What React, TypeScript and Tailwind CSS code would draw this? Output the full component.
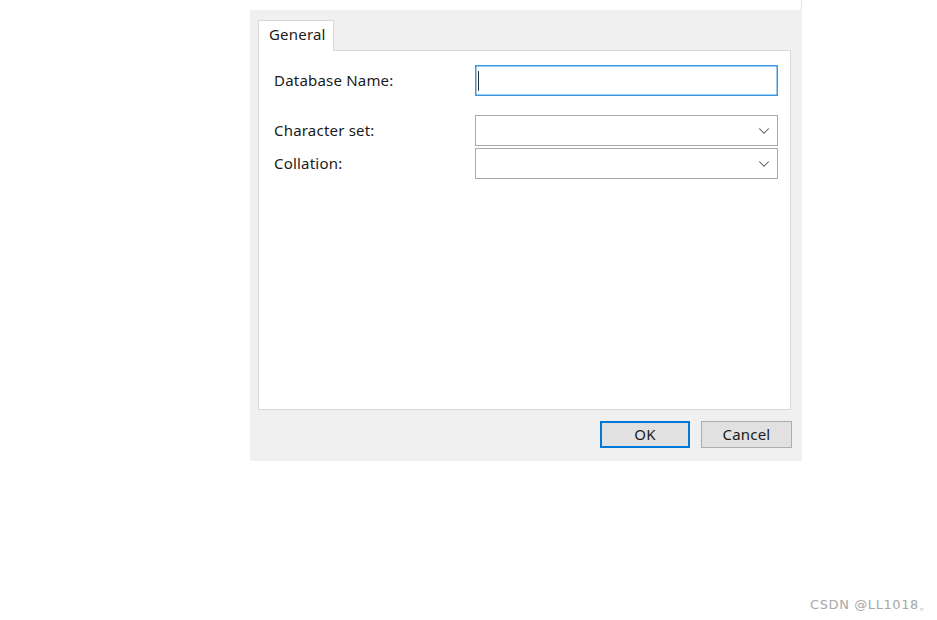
import { ChevronDown } from 'lucide-react';

function Select() {
  return (
    <div className="h-[31px] w-[303px] border border-solid border-[#a9a9a9] bg-white flex items-center justify-end pr-[4px]">
      <ChevronDown size={18} strokeWidth={1.4} className="text-[#555555]" />
    </div>
  );
}

export default function App() {
  return (
    <div className="relative w-[937px] h-[620px] bg-white text-[15px] tracking-[0.2px] text-[#1a1a1a] font-['Noto_Sans','Open_Sans',sans-serif]">
      <div className="ml-[250px] w-[552px]">
        {/* top strip */}
        <div className="h-[10px] bg-white border-r border-[#e4e4e4]" />

        {/* dialog body */}
        <div className="h-[451px] bg-[#f0f0f0] pt-[10px] pl-[8px] pr-[11px] flex flex-col">
          <div className="flex">
            <div className="relative z-10 -mb-px h-[31px] w-[76px] bg-white border border-b-0 border-[#d9d9d9] flex items-center pl-[10px] pb-[3px] leading-none">
              General
            </div>
          </div>
          <div className="h-[360px] w-[533px] bg-white border border-[#d9d9d9] pt-[14px] pl-[15px] pr-[12px]">
            <div className="flex items-center">
              <div className="w-[201px]">Database Name:</div>
              <div className="h-[31px] w-[303px] bg-white ring-[1.5px] ring-inset ring-[#3a97e4] flex items-center pl-[3px]">
                <div className="w-px h-[20px] bg-[#333333]" />
              </div>
            </div>
            <div className="mt-[19px] flex items-center">
              <div className="w-[201px]">Character set:</div>
              <Select />
            </div>
            <div className="mt-[2px] flex items-center">
              <div className="w-[201px]">Collation:</div>
              <Select />
            </div>
          </div>

          <div className="mt-[11px] flex justify-end gap-[11px]">
            <button className="h-[27px] w-[90px] bg-[#e1e1e1] border-2 border-solid border-[#0078d7] leading-none">
              OK
            </button>
            <button className="h-[27px] w-[91px] bg-[#e1e1e1] border border-solid border-[#adadad] leading-none -mr-px">
              Cancel
            </button>
          </div>
        </div>
      </div>

      <div className="absolute left-[810px] top-[595px] text-[13px] tracking-[0.6px] text-[#a8a8a8] font-['DejaVu_Sans',sans-serif]">
        CSDN @LL1018。
      </div>
    </div>
  );
}
